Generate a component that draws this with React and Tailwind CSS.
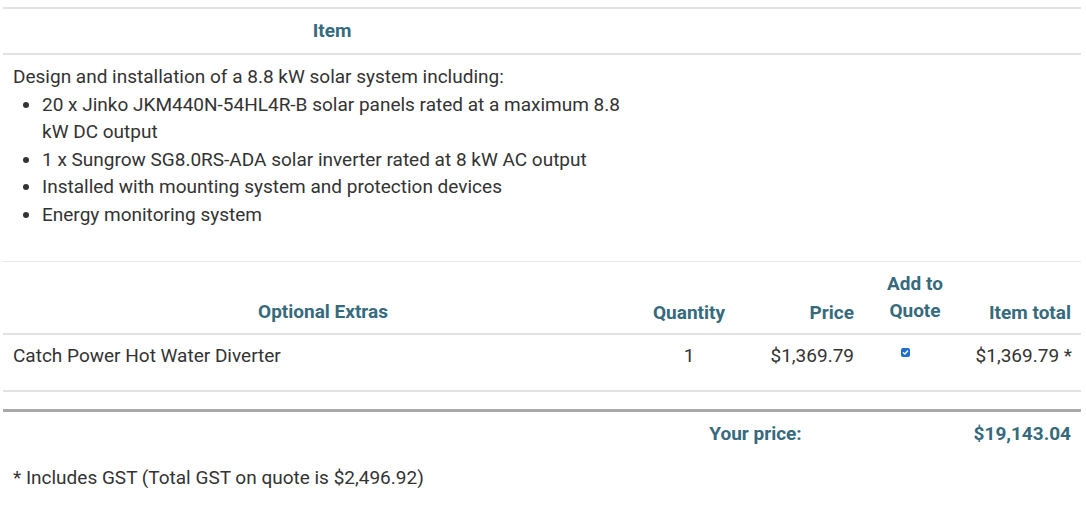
const extras = [
  { name: 'Catch Power Hot Water Diverter', qty: 1, price: '$1,369.79', total: '$1,369.79 *', checked: true },
];

const items = [
  '20 x Jinko JKM440N-54HL4R-B solar panels rated at a maximum 8.8 kW DC output',
  '1 x Sungrow SG8.0RS-ADA solar inverter rated at 8 kW AC output',
  'Installed with mounting system and protection devices',
  'Energy monitoring system',
];

function Tick() {
  return (
    <span className="inline-flex h-[9px] w-[9px] items-center justify-center rounded-[2px] bg-[#1f6fd1]">
      <svg viewBox="0 0 10 10" className="h-[7px] w-[7px]" fill="none" stroke="white" strokeWidth="2" strokeLinecap="round" strokeLinejoin="round">
        <path d="M2 5.2l2 2L8 3" />
      </svg>
    </span>
  );
}

export default function App() {
  return (
    <div className="min-h-[517px] w-[1086px] bg-white pt-[7px] pl-[3px] text-[19px] leading-[27.5px] text-[#333] font-['Roboto','Liberation_Sans',sans-serif]">
      <div className="w-[1078px]">
        {/* Item header */}
        <div className="border-t-2 border-b-2 border-[#e2e2e2] grid grid-cols-[658px_1fr]">
          <div className="h-[44px] flex items-center justify-center font-bold text-[#366a7d]">Item</div>
          <div />
        </div>

        {/* Description */}
        <div className="border-b border-[#e6e6e6] pl-[10px] pt-[8px] pb-[33px]">
          <div>Design and installation of a 8.8 kW solar system including:</div>
          <ul className="list-disc pl-[29px] w-[625px]">
            {items.map((i) => (
              <li key={i}>{i}</li>
            ))}
          </ul>
        </div>

        {/* Optional extras header */}
        <div className="grid grid-cols-[640px_92px_129px_102px_115px] border-b-2 border-[#e2e2e2] font-bold text-[#366a7d] leading-[27px]">
          <div className="flex items-end justify-center pb-[8px] pt-[8px]">Optional Extras</div>
          <div className="flex items-end justify-center pb-[7px]">Quantity</div>
          <div className="flex items-end justify-end pr-[10px] pb-[7px]">Price</div>
          <div className="flex items-end justify-center text-center pb-[9px] pt-[8px]">Add to<br />Quote</div>
          <div className="flex items-end justify-end pr-[10px] pb-[7px]">Item total</div>
        </div>

        {extras.map((e) => (
          <div key={e.name} className="grid grid-cols-[640px_92px_129px_102px_115px] border-b-2 border-[#e2e2e2] h-[57px] pt-[7px]">
            <div className="pl-[10px]">{e.name}</div>
            <div className="text-center">{e.qty}</div>
            <div className="text-right pr-[10px]">{e.price}</div>
            <div className="flex justify-start pt-[6px] pl-[37px]">{e.checked && <Tick />}</div>
            <div className="text-right pr-[9px]">{e.total}</div>
          </div>
        ))}

        {/* Total */}
        <div className="mt-[17px] border-t-[3px] border-[#a9a9a9] grid grid-cols-[640px_221px_102px_115px] pt-[8px] font-bold text-[#366a7d]">
          <div />
          <div className="text-center pl-[4px]">Your price:</div>
          <div />
          <div className="text-right pr-[10px]">$19,143.04</div>
        </div>

        <div className="pl-[10px] pt-[16px]">* Includes GST (Total GST on quote is $2,496.92)</div>
      </div>
    </div>
  );
}
